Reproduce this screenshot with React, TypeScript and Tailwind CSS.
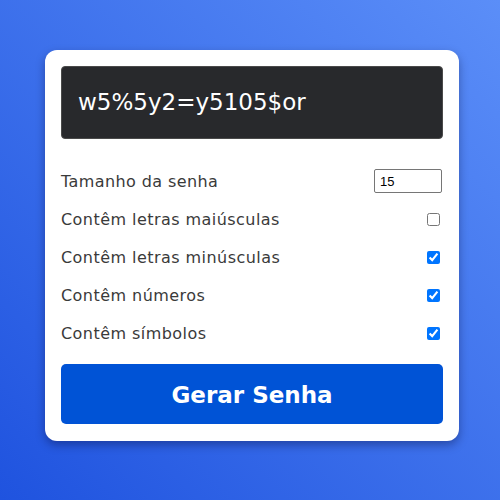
import React, { useState } from 'react';

const OPTIONS = [
  { key: 'upper', label: 'Contêm letras maiúsculas', initial: false },
  { key: 'lower', label: 'Contêm letras minúsculas', initial: true },
  { key: 'numbers', label: 'Contêm números', initial: true },
  { key: 'symbols', label: 'Contêm símbolos', initial: true },
];

export default function App() {
  const [length, setLength] = useState('15');
  const [checked, setChecked] = useState<Record<string, boolean>>(
    Object.fromEntries(OPTIONS.map(o => [o.key, o.initial]))
  );

  return (
    <div
      className="min-h-[500px] w-[500px] pt-[50px] pl-[45px] bg-[linear-gradient(to_top_right,#1f53df,#5b8ef8)]"
      style={{ fontFamily: '"DejaVu Sans", "Open Sans", sans-serif' }}
    >
      <div className="w-[414px] rounded-xl bg-white px-4 pt-4 pb-[17px] shadow-[0_4px_10px_rgba(0,0,40,0.35)]">
        {/* Generated password */}
        <div className="h-[73px] rounded-sm border border-[#4a4a4a] bg-[#28292c] pl-4 flex items-center">
          <span className="text-[23px] text-white">w5%5y2=y5105$or</span>
        </div>

        {/* Options */}
        <div className="mt-[23px] flex flex-col">
          <div className="h-[38px] flex items-center justify-between text-[#3a3a3a] text-[16px]">
            <span className="pt-[2px] tracking-[0.4px]">Tamanho da senha</span>
            <input
              type="number"
              value={length}
              onChange={e => setLength(e.target.value)}
              className="w-[68px] h-[24px] border border-[#767676] rounded-[2px] px-[5px] text-[13px] text-black mr-px"
              style={{ fontFamily: '"Liberation Sans", Arial, sans-serif' }}
            />
          </div>
          {OPTIONS.map(o => (
            <div key={o.key} className="h-[38px] flex items-center justify-between text-[#3a3a3a] text-[16px]">
              <span className="pt-[2px] tracking-[0.45px]">{o.label}</span>
              <input
                type="checkbox"
                checked={checked[o.key]}
                onChange={e => setChecked({ ...checked, [o.key]: e.target.checked })}
                className="w-[13px] h-[13px] mr-[3px]"
              />
            </div>
          ))}
        </div>

        <button className="mt-3 w-full h-[60px] rounded-[5px] bg-[#0053d6] text-white text-[23px] font-bold">
          <span className="block pt-[2px]">Gerar Senha</span>
        </button>
      </div>
    </div>
  );
}
